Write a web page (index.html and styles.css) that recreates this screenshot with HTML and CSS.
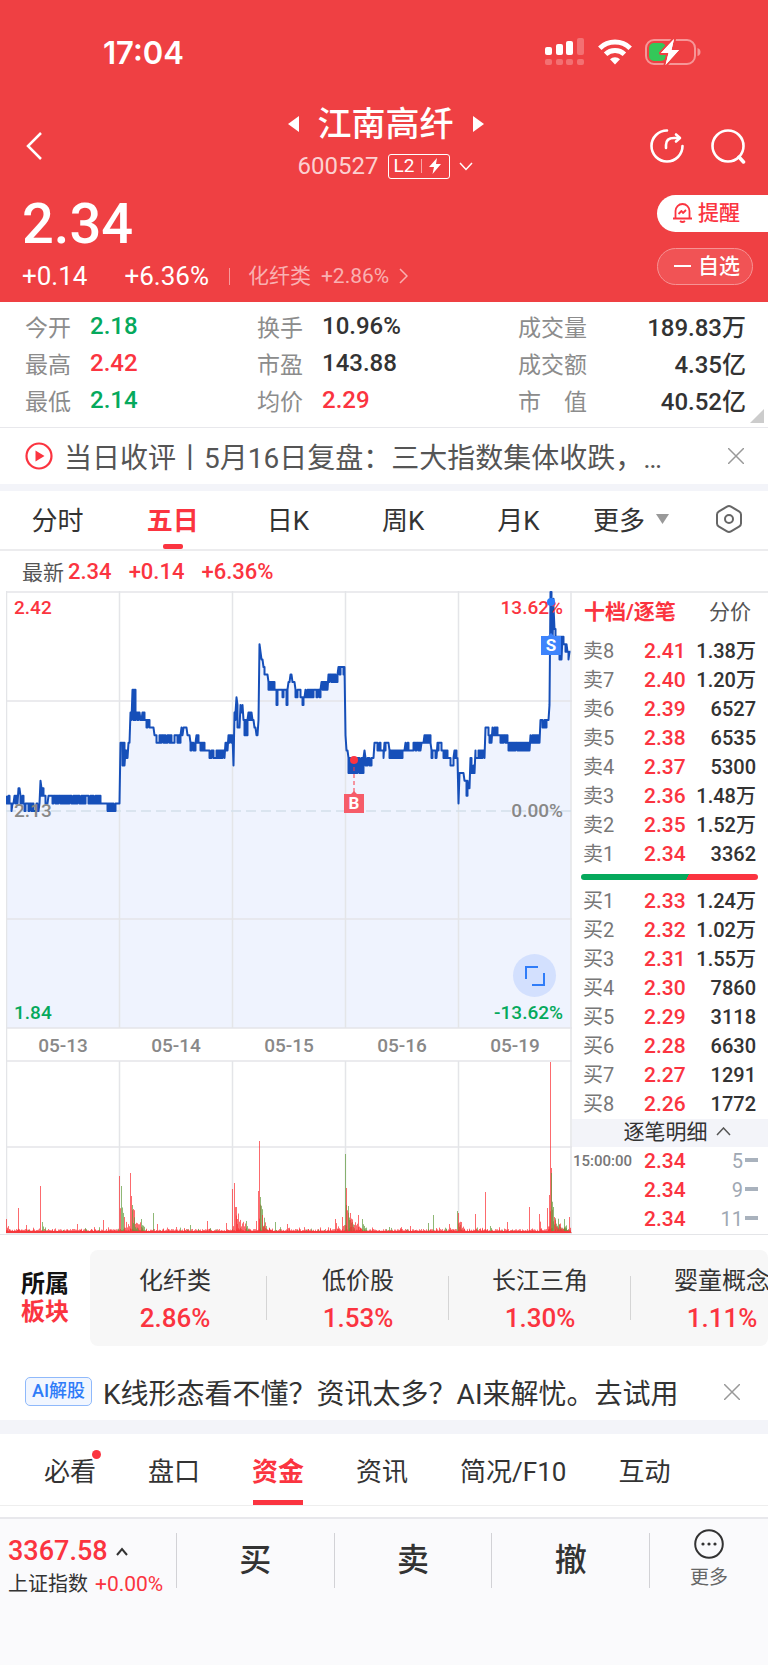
FILE: index.html
```
<!DOCTYPE html>
<html lang="zh-CN">
<head>
  <meta charset="UTF-8">
  <meta name="viewport" content="width=device-width, initial-scale=1.0">
  <title>江南高纤 600527</title>
  <link rel="stylesheet" href="styles.css">
</head>
<body>
  <header class="top">
    <div class="status">
      <span class="clock">17:04</span>
      <div class="status-icons">
        <svg width="40" height="28" viewBox="0 0 40 28" fill="#fff">
          <rect x="0" y="9" width="7" height="8" rx="2"/>
          <rect x="11" y="6" width="7" height="11" rx="2"/>
          <rect x="21" y="3" width="7" height="14" rx="2"/>
          <g opacity=".25">
            <rect x="32" y="0" width="7" height="17" rx="2"/>
            <rect x="0" y="21" width="7" height="6" rx="2"/>
            <rect x="11" y="21" width="7" height="6" rx="2"/>
            <rect x="21" y="21" width="7" height="6" rx="2"/>
            <rect x="32" y="21" width="7" height="6" rx="2"/>
          </g>
        </svg>
        <svg width="34" height="26" viewBox="0 0 34 26" fill="none" stroke="#fff" stroke-width="5">
          <path d="M1.8 9.2a22 22 0 0 1 30.4 0"/>
          <path d="M7.600 15.300a13.600 13.600 0 0 1 18.800 0"/>
          <path d="M17 25.500l-5-5.200a7 7 0 0 1 10 0z" fill="#fff" stroke="none"/>
        </svg>
        <svg width="56" height="28" viewBox="0 0 56 28">
          <rect x="1" y="2" width="49" height="24" rx="8" fill="none" stroke="#fff" stroke-opacity=".45" stroke-width="2"/>
          <path d="M52.500 10v8q3-1 3-4t-3-4z" fill="#fff" opacity=".45"/>
          <rect x="4" y="5" width="17" height="18" rx="5" fill="#34c759"/>
          <path d="M29 1L16 15h7.500L20.500 27 34 12h-7.500z" fill="#fff" stroke="#ef4043" stroke-width="4" paint-order="stroke" stroke-linejoin="round"/>
          <path d="M29 1L16 15h7.500L20.500 27 34 12h-7.500z" fill="#fff"/>
        </svg>
      </div>
    </div>

    <div class="nav">
      <button class="icon-btn back" aria-label="返回">
        <svg width="18" height="30" viewBox="0 0 18 30" fill="none" stroke="#fff" stroke-width="2.500"><path d="M16 2L3 15l13 13"/></svg>
      </button>
      <div class="nav-title">
        <div class="name-row">
          <button class="icon-btn" aria-label="上一只"><svg width="12" height="16" viewBox="0 0 12 16" fill="#fff"><path d="M11 0v16L0 8z"/></svg></button>
          <h1>江南高纤</h1>
          <button class="icon-btn" aria-label="下一只"><svg width="12" height="16" viewBox="0 0 12 16" fill="#fff"><path d="M1 0v16l11-8z"/></svg></button>
        </div>
        <div class="code-row">
          <span>600527</span>
          <span class="level">L2<i></i><svg width="12" height="16" viewBox="0 0 12 16" fill="#fff"><path d="M8 0L0 9h5L3.500 16 12 6H7z"/></svg></span>
          <svg width="14" height="9" viewBox="0 0 14 9" fill="none" stroke="#fff" stroke-width="1.500"><path d="M1 1l6 6.500L13 1"/></svg>
        </div>
      </div>
      <div class="nav-tools">
        <button class="icon-btn" aria-label="分享">
          <svg width="36" height="36" viewBox="0 0 36 36" fill="none" stroke="#fff" stroke-width="2.600" stroke-linecap="round" stroke-linejoin="round">
            <path d="M18 2.500a15.500 15.500 0 1 0 15.500 15.500"/>
            <path d="M17 20v-3q0-7 8-7h5"/><path d="M27 6.500l4 3.500-4 3.500"/>
          </svg>
        </button>
        <button class="icon-btn" aria-label="搜索">
          <svg width="36" height="36" viewBox="0 0 36 36" fill="none" stroke="#fff" stroke-width="2.600" stroke-linecap="round">
            <circle cx="18" cy="18" r="15.500"/><path d="M29 29l4.500 5" stroke-width="3.500"/>
          </svg>
        </button>
      </div>
    </div>

    <div class="quote">
      <div>
        <div class="price">2.34</div>
        <div class="change">
          <span>+0.14</span>
          <span class="pct">+6.36%</span>
          <a href="#sector" class="industry">化纤类 <span>+2.86%</span><svg width="9" height="16" viewBox="0 0 9 16" fill="none" stroke="currentColor" stroke-width="1.500"><path d="M1 1l7 7-7 7"/></svg></a>
        </div>
      </div>
      <div class="quote-btns">
        <button class="remind">
          <svg width="21" height="21" viewBox="0 0 21 21" fill="none" stroke="#fb3440" stroke-width="1.800" stroke-linejoin="round"><path d="M3.500 16V9a7 7 0 0 1 14 0v7M1 16.500h19M8 19q2.500 2 5 0M6.500 12l3-3 1.500 2 3-3"/></svg>
          提醒
        </button>
        <button class="favorite"><i></i>自选</button>
      </div>
    </div>
  </header>

  <section class="stats">
    <dl>
      <div><dt>今开</dt><dd class="green">2.18</dd></div>
      <div><dt>最高</dt><dd class="red">2.42</dd></div>
      <div><dt>最低</dt><dd class="green">2.14</dd></div>
    </dl>
    <dl>
      <div><dt>换手</dt><dd>10.96%</dd></div>
      <div><dt>市盈</dt><dd>143.88</dd></div>
      <div><dt>均价</dt><dd class="red">2.29</dd></div>
    </dl>
    <dl class="wide">
      <div><dt>成交量</dt><dd>189.83万</dd></div>
      <div><dt>成交额</dt><dd>4.35亿</dd></div>
      <div><dt>市　值</dt><dd>40.52亿</dd></div>
    </dl>
  </section>

  <section class="news">
    <svg width="28" height="28" viewBox="0 0 28 28"><circle cx="14" cy="14" r="12.500" fill="none" stroke="#fb3440" stroke-width="2.200"/><path d="M10.500 8.500v11l9-5.500z" fill="#fb3440"/></svg>
    <a href="#news">当日收评丨5月16日复盘：三大指数集体收跌，…</a>
    <button class="icon-btn" aria-label="关闭"><svg width="16" height="16" viewBox="0 0 16 16" stroke="#999" stroke-width="1.500"><path d="M0 0l16 16M16 0L0 16"/></svg></button>
  </section>

  <nav class="period">
    <button>分时</button>
    <button class="active">五日</button>
    <button>日K</button>
    <button>周K</button>
    <button>月K</button>
    <button class="more">更多<svg width="13" height="10" viewBox="0 0 13 10" fill="#999"><path d="M0 0h13L6.500 10z"/></svg></button>
    <button class="setting" aria-label="设置"><svg width="26" height="28" viewBox="0 0 26 28" fill="none" stroke="#666" stroke-width="2"><path d="M11 1.700q2-1.200 4 0l8 4.600q2 1.200 2 3.200v9q0 2-2 3.200l-8 4.600q-2 1.200-4 0l-8-4.600q-2-1.200-2-3.200v-9q0-2 2-3.200z"/><circle cx="13" cy="14" r="4"/></svg></button>
  </nav>

  <div class="latest">最新<span>2.34</span><span>+0.14</span><span>+6.36%</span></div>

  <main class="market">
    <div class="chart-wrap">
      <svg class="chart" viewBox="0 0 566 643">
        <path id="area" fill="#eff3fe"/>
        <g id="grid" stroke="#e4e5e8" stroke-width="1.500"></g>
        <path d="M0 220H565" stroke="#d3dfea" stroke-width="1.500" stroke-dasharray="10 5"/>
        <g id="volume"></g>
        <path id="line" fill="none" stroke="#164fb9" stroke-width="2" stroke-linejoin="round"/>
        <g class="axis">
          <text x="8" y="23" class="up">2.42</text>
          <text x="557" y="23" text-anchor="end" class="up">13.62%</text>
          <text x="8" y="226">2.13</text>
          <text x="557" y="226" text-anchor="end">0.00%</text>
          <text x="8" y="428" class="down">1.84</text>
          <text x="557" y="428" text-anchor="end" class="down">-13.62%</text>
        </g>
        <g class="axis" id="dates" text-anchor="middle"></g>
        <g class="mark">
          <path d="M348 169v34" stroke="#fb3440" stroke-dasharray="4 3"/>
          <circle cx="348" cy="169" r="4" fill="#fb3440"/>
          <path d="M338 203h7l3-3 3 3h7v19h-20z" fill="#f65c69"/>
          <text x="348" y="218">B</text>
          <circle cx="545" cy="11" r="4" fill="#2a7cfb"/>
          <path d="M535 45h7l3-3 3 3h7v19h-20z" fill="#3e84fc"/>
          <text x="545" y="60">S</text>
        </g>
      </svg>
      <button class="expand" aria-label="全屏">
        <svg width="20" height="20" viewBox="0 0 20 20" fill="none" stroke="#2f7cf8" stroke-width="2"><path d="M1 13V1h12M19 7v12H7"/></svg>
      </button>
    </div>

    <aside class="book">
      <div class="book-tabs">
        <button class="active">十档/逐笔</button>
        <button>分价</button>
      </div>
      <table>
        <tr><th>卖8</th><td>2.41</td><td>1.38万</td></tr>
        <tr><th>卖7</th><td>2.40</td><td>1.20万</td></tr>
        <tr><th>卖6</th><td>2.39</td><td>6527</td></tr>
        <tr><th>卖5</th><td>2.38</td><td>6535</td></tr>
        <tr><th>卖4</th><td>2.37</td><td>5300</td></tr>
        <tr><th>卖3</th><td>2.36</td><td>1.48万</td></tr>
        <tr><th>卖2</th><td>2.35</td><td>1.52万</td></tr>
        <tr><th>卖1</th><td>2.34</td><td>3362</td></tr>
      </table>
      <div class="ratio"></div>
      <table>
        <tr><th>买1</th><td>2.33</td><td>1.24万</td></tr>
        <tr><th>买2</th><td>2.32</td><td>1.02万</td></tr>
        <tr><th>买3</th><td>2.31</td><td>1.55万</td></tr>
        <tr><th>买4</th><td>2.30</td><td>7860</td></tr>
        <tr><th>买5</th><td>2.29</td><td>3118</td></tr>
        <tr><th>买6</th><td>2.28</td><td>6630</td></tr>
        <tr><th>买7</th><td>2.27</td><td>1291</td></tr>
        <tr><th>买8</th><td>2.26</td><td>1772</td></tr>
      </table>
      <button class="detail">逐笔明细<svg width="15" height="9" viewBox="0 0 15 9" fill="none" stroke="#555" stroke-width="1.500"><path d="M1 8l6.500-7L14 8"/></svg></button>
      <table class="ticks">
        <tr><th>15:00:00</th><td>2.34</td><td>5<i></i></td></tr>
        <tr><th></th><td>2.34</td><td>9<i></i></td></tr>
        <tr><th></th><td>2.34</td><td>11<i></i></td></tr>
      </table>
    </aside>
  </main>

  <section class="sector" id="sector">
    <h2>所属<span>板块</span></h2>
    <div class="sector-list">
      <a href="#s1">化纤类<b>2.86%</b></a>
      <a href="#s2">低价股<b>1.53%</b></a>
      <a href="#s3">长江三角<b>1.30%</b></a>
      <a href="#s4">婴童概念<b>1.11%</b></a>
    </div>
  </section>

  <section class="ai">
    <span class="ai-tag">AI解股</span>
    <a href="#ai">K线形态看不懂？资讯太多？AI来解忧。去试用</a>
    <button class="icon-btn" aria-label="关闭"><svg width="16" height="16" viewBox="0 0 16 16" stroke="#999" stroke-width="1.500"><path d="M0 0l16 16M16 0L0 16"/></svg></button>
  </section>

  <nav class="info-tabs">
    <button class="dot">必看</button>
    <button>盘口</button>
    <button class="active">资金</button>
    <button>资讯</button>
    <button>简况/F10</button>
    <button>互动</button>
  </nav>

  <footer class="bottom">
    <div class="index">
      <div class="index-value">3367.58<svg width="12" height="9" viewBox="0 0 12 9" fill="none" stroke="#333" stroke-width="2"><path d="M1 8l5-6 5 6"/></svg></div>
      <div class="index-name">上证指数 <span>+0.00%</span></div>
    </div>
    <button class="trade">买</button>
    <button class="trade">卖</button>
    <button class="trade">撤</button>
    <button class="bottom-more">
      <svg width="30" height="30" viewBox="0 0 30 30"><circle cx="15" cy="15" r="13.800" fill="none" stroke="#333" stroke-width="2"/><g fill="#333"><circle cx="9" cy="15" r="1.600"/><circle cx="15" cy="15" r="1.600"/><circle cx="21" cy="15" r="1.600"/></g></svg>
      更多
    </button>
  </footer>

  <script src="chart.js"></script>
</body>
</html>
```
FILE: styles.css
```
* {
  box-sizing: border-box;
}
body {
  margin: 0;
  min-height: 100vh;
  display: flex;
  flex-direction: column;
  font-family: Roboto, "Noto Sans CJK SC", sans-serif;
  color: #333;
  background: #fff;
  overflow-x: hidden;
}
button {
  font: inherit;
  color: inherit;
  background: none;
  border: none;
  padding: 0;
  cursor: pointer;
}
a {
  color: inherit;
  text-decoration: none;
}
svg {
  display: block;
  flex-shrink: 0;
}
.red {
  color: #fb3440;
}
.green {
  color: #05a95c;
}

/* header */
.top {
  background: #ef4043;
  color: #fff;
  height: 302px;
}
.status {
  display: flex;
  justify-content: space-between;
  align-items: center;
  height: 104px;
  padding: 0 67px 0 103px;
}
.clock {
  font-family: Inter, sans-serif;
  font-size: 31px;
  font-weight: 600;
}
.status-icons {
  display: flex;
  align-items: center;
  gap: 13px;
}
.nav {
  display: grid;
  grid-template-columns: 1fr auto 1fr;
  align-items: center;
  height: 84px;
  padding: 0 22px 0 25px;
}
.back {
  justify-self: start;
}
.name-row, .code-row {
  display: flex;
  align-items: center;
  justify-content: center;
}
.name-row {
  gap: 18px;
}
h1 {
  margin: 0;
  font-size: 34px;
  line-height: 40px;
  font-weight: 500;
}
.code-row {
  gap: 9px;
  font-size: 24px;
  line-height: 44px;
  color: #fcd0d1;
}
.level {
  display: flex;
  align-items: center;
  gap: 7px;
  height: 25px;
  padding: 0 8px 0 5px;
  border: 1px solid #fff;
  border-radius: 3px;
  font-size: 19px;
  color: #fff;
}
.level i {
  width: 1px;
  height: 14px;
  background: #f9a5a6;
}
.nav-tools {
  justify-self: end;
  display: flex;
  gap: 25px;
}
.quote {
  display: flex;
  justify-content: space-between;
}
.price {
  padding-left: 22px;
  font-size: 56px;
  line-height: 72px;
  font-weight: 500;
}
.change {
  display: flex;
  align-items: center;
  padding-left: 22px;
  font-size: 26px;
  line-height: 32px;
}
.pct {
  padding: 0 20px 0 37px;
}
.industry {
  display: flex;
  align-items: center;
  gap: 10px;
  font-size: 21px;
  line-height: 28px;
  color: #f9b0b1;
}
.industry::before {
  content: "";
  width: 1px;
  height: 17px;
  margin-right: 8px;
  background: #f79a9b;
}
.quote-btns {
  width: 111px;
  padding-top: 7px;
}
.remind, .favorite {
  display: flex;
  align-items: center;
  height: 37px;
  font-size: 21px;
  line-height: 28px;
  font-weight: 500;
}
.remind {
  width: 100%;
  padding: 0 0 2px 15px;
  gap: 5px;
  background: #fff;
  color: #fb3440;
  border-radius: 19px 0 0 19px;
}
.favorite {
  width: 96px;
  margin-top: 16px;
  padding: 0 0 2px 16px;
  gap: 7px;
  border: 1px solid #f69394;
  border-radius: 19px;
  background: #f15355;
}
.favorite i {
  width: 17px;
  height: 2px;
  background: #fff;
}

/* key figures */
.stats {
  position: relative;
  display: grid;
  grid-template-columns: 232px 261px 1fr;
  padding: 5px 22px 9px 25px;
  border-bottom: 1px solid #e8e8ec;
}
.stats::after {
  content: "";
  position: absolute;
  right: 4px;
  bottom: 4px;
  border-left: 14px solid transparent;
  border-bottom: 14px solid #ccc;
}
.stats dl {
  margin: 0;
}
.stats dl div {
  display: flex;
  align-items: center;
  gap: 19px;
  height: 37px;
}
.stats dt {
  font-size: 23px;
  color: #8c8c8c;
}
.stats dd {
  margin: 0;
  font-size: 24px;
  font-weight: 500;
}
.stats .wide div {
  justify-content: space-between;
}

.news, .ai {
  display: flex;
  align-items: center;
  padding: 0 24px 0 25px;
  font-size: 28px;
  border-bottom: 7px solid #f3f4f9;
}
.news a, .ai a {
  flex: 1;
  white-space: nowrap;
}
.news {
  height: 63px;
  gap: 11px;
  color: #555;
}

/* chart period */
.period {
  display: grid;
  grid-template-columns: repeat(5, 15%) 110px 1fr;
  height: 60px;
  border-bottom: 2px solid #ececee;
  font-size: 26px;
}
.period button {
  padding-bottom: 3px;
}
.period .active {
  position: relative;
  color: #fb3440;
  font-weight: 700;
}
.period .active::after {
  content: "";
  position: absolute;
  left: 0;
  right: 0;
  bottom: 0;
  width: 20px;
  height: 5px;
  margin: 0 auto;
  border-radius: 2px;
  background: #fb3440;
}
.period .more, .period .setting {
  display: flex;
  align-items: center;
  justify-content: center;
  gap: 11px;
}
.period .setting {
  padding-left: 4px;
}
.latest {
  display: flex;
  align-items: center;
  height: 40px;
  padding-left: 22px;
  font-size: 21px;
  color: #555;
}
.latest span {
  margin: 0 13px 0 4px;
  font-size: 22px;
  font-weight: 500;
  color: #fb3440;
}

/* chart and order book */
.market {
  display: grid;
  grid-template-columns: 1fr 196px;
  align-items: start;
  border-bottom: 1px solid #e4e5e8;
}
.chart-wrap {
  position: relative;
  padding-left: 6px;
}
.chart {
  width: 100%;
}
.axis text {
  font-size: 19px;
  font-weight: 500;
  fill: #888;
}
.axis .up {
  fill: #fb3440;
}
.axis .down {
  fill: #05a95c;
}
.mark text {
  font-size: 17px;
  font-weight: 700;
  fill: #fff;
  text-anchor: middle;
}
.expand {
  position: absolute;
  right: 16px;
  bottom: 237px;
  display: flex;
  align-items: center;
  justify-content: center;
  width: 43px;
  height: 43px;
  border-radius: 50%;
  background: #d3e0fe;
}
.book {
  border-top: 2px solid #e9eaec;
}
.book-tabs {
  display: flex;
  justify-content: space-between;
  height: 44px;
  padding: 0 17px 6px 12px;
  font-size: 21px;
  line-height: 36px;
  color: #555;
}
.book-tabs .active {
  color: #fb3440;
  font-weight: 700;
}
.book table {
  width: 100%;
  border-collapse: collapse;
  table-layout: fixed;
}
.book tr {
  height: 29px;
}
.book th, .book td {
  padding: 0;
  line-height: 29px;
}
.book th {
  width: 72px;
  padding-left: 11px;
  font-size: 20px;
  font-weight: 400;
  text-align: left;
  color: #777;
}
.book td {
  width: 44px;
  font-size: 21px;
  font-weight: 500;
  color: #fb3440;
}
.book td:last-child {
  width: 80px;
  padding-right: 12px;
  text-align: right;
  font-size: 20px;
  color: #333;
}
.ratio {
  height: 6px;
  margin: 5px 10px 7px 9px;
  border-radius: 3px;
  background: linear-gradient(120deg, #05a95c 60%, #fb3440 60%);
}
.detail {
  display: flex;
  align-items: center;
  justify-content: center;
  gap: 8px;
  width: 100%;
  height: 28px;
  padding: 0 8px 3px 22px;
  background: #f3f4f9;
  font-size: 21px;
  line-height: 24px;
}
.book .ticks th {
  padding-left: 1px;
  font-size: 15px;
  font-weight: 500;
}
.book .ticks td:last-child {
  padding-right: 10px;
  font-weight: 400;
  color: #9fa8b3;
}
.ticks i {
  display: inline-block;
  width: 13px;
  height: 4px;
  margin-left: 2px;
  vertical-align: 6px;
  background: #a9b2bd;
}

/* sectors */
.sector {
  display: flex;
  align-items: center;
  padding: 15px 0 17px 21px;
}
h2 {
  width: 69px;
  margin: 0;
  font-size: 24px;
  line-height: 28px;
  font-weight: 700;
  color: #111;
}
h2 span {
  display: block;
  color: #fb3440;
}
.sector-list {
  flex: 1;
  display: flex;
  height: 96px;
  border-radius: 8px;
  background: #f7f7f7;
  overflow: hidden;
}
.sector-list a {
  position: relative;
  flex: 0 0 182px;
  padding-top: 13px;
  text-align: center;
  font-size: 24px;
  line-height: 37px;
  white-space: nowrap;
}
.sector-list a:first-child {
  flex-basis: 177px;
  padding-right: 7px;
}
.sector-list a:not(:last-child)::after {
  content: "";
  position: absolute;
  right: 0;
  top: 26px;
  width: 1px;
  height: 44px;
  background: #d5d5d5;
}
.sector-list b {
  display: block;
  font-size: 26px;
  font-weight: 500;
  color: #fb3440;
}

.ai {
  height: 71px;
  gap: 11px;
  padding-right: 28px;
  border-bottom: 14px solid #f3f4f9;
}
.ai-tag {
  height: 29px;
  padding: 0 6px;
  border: 1px solid #8fb9fb;
  border-radius: 5px;
  background: #f1f6ff;
  font-size: 18px;
  line-height: 26px;
  font-weight: 500;
  color: #2f7cf8;
}

.info-tabs {
  display: flex;
  gap: 52px;
  height: 72px;
  padding: 0 44px;
  border-bottom: 1px solid #eee;
  font-size: 26px;
}
.info-tabs button {
  position: relative;
  white-space: nowrap;
}
.info-tabs .active {
  color: #fb3440;
  font-weight: 700;
}
.info-tabs .active::after {
  content: "";
  position: absolute;
  left: 1px;
  right: 1px;
  bottom: 0;
  height: 5px;
  background: #fb3440;
}
.dot::after {
  content: "";
  position: absolute;
  right: -5px;
  top: 16px;
  width: 9px;
  height: 9px;
  border-radius: 50%;
  background: #fb3440;
}

/* bottom bar */
.bottom {
  flex: 1;
  display: grid;
  grid-template-columns: 176px 1fr 1fr 1fr 119px;
  align-items: start;
  margin-top: 11px;
  padding: 14px 0 64px;
  border-top: 2px solid #e8e8ec;
  background: #fafafc;
}
.index {
  padding-left: 8px;
  white-space: nowrap;
}
.index-value {
  display: flex;
  align-items: center;
  gap: 8px;
  font-size: 27px;
  line-height: 36px;
  font-weight: 500;
  color: #fb3440;
}
.index-name {
  font-size: 20px;
  line-height: 30px;
}
.index-name span {
  margin-left: 2px;
  font-size: 21px;
  color: #fb3440;
}
.trade {
  height: 55px;
  border-left: 1px solid #d2d2d6;
  font-size: 32px;
  line-height: 55px;
  font-weight: 500;
}
.bottom-more {
  display: flex;
  flex-direction: column;
  align-items: center;
  height: 55px;
  border-left: 1px solid #d2d2d6;
  font-size: 19px;
  line-height: 38px;
  color: #666;
}
.bottom-more svg {
  margin-top: -4px;
}
```
FILE: chart.js
```
const NS = 'http://www.w3.org/2000/svg';
const DAY = 113;      // width of one trading day
const ZERO = 220;     // y of the 2.13 line
const STEP = 7.58;    // height of one cent
const BOTTOM = 437;
const BASE = 642;     // bottom of the volume pane

// [x, low, high] in cents above 2.13, price moves inside the band until next x
const price = [
  [0, 1, 2], [4, 0, 1], [6, 1, 1], [8, 1, 2], [12, 3, 3], [14, 1, 2], [18, 0, 1], [33, 1, 1],
  [34, 4, 4], [35, 2, 3], [38, 1, 2], [42, 2, 2], [46, 1, 2], [96, 0, 1], [110, 1, 1],
  [114, 9, 9], [116, 6, 9], [119, 7, 8], [122, 9, 9], [124, 12, 13], [126, 16, 16], [127, 12, 16],
  [130, 13, 13], [131, 12, 13], [134, 11, 12], [136, 12, 13], [140, 11, 12], [148, 10, 10],
  [150, 9, 10], [175, 10, 11], [177, 11, 11], [181, 10, 10], [184, 8, 9], [190, 9, 10],
  [193, 8, 9], [201, 8, 8], [203, 7, 8], [219, 8, 9], [222, 9, 10], [227, 6, 6],
  [228, 12, 13], [230, 15, 15], [231, 11, 14], [234, 13, 14], [237, 12, 12], [238, 10, 12],
  [242, 12, 13], [246, 12, 12], [248, 11, 11], [250, 10, 10], [252, 12, 12], [253, 22, 22],
  [254, 21, 21], [255, 19, 20], [257, 18, 19], [260, 16, 18], [262, 16, 17], [270, 14, 16],
  [273, 15, 16], [280, 14, 16], [282, 17, 17], [284, 18, 18], [286, 17, 17], [289, 15, 16],
  [296, 14, 15], [299, 15, 16], [315, 16, 17], [322, 17, 18], [332, 18, 19],
  [339, 10, 10], [340, 7, 8], [342, 5, 7], [358, 8, 8], [359, 6, 7], [368, 8, 9], [375, 7, 8],
  [378, 8, 9], [383, 7, 8], [399, 8, 9], [415, 9, 9], [418, 9, 10], [425, 7, 8], [431, 8, 9],
  [436, 7, 8], [444, 6, 7], [448, 7, 8], [452, 1, 1], [453, 5, 5], [455, 3, 5],
  [458, 2, 4], [462, 3, 3], [464, 5, 7], [467, 5, 6], [469, 7, 8], [479, 11, 11],
  [481, 10, 11], [483, 9, 10], [486, 10, 11], [492, 9, 10], [502, 8, 9], [524, 9, 10],
  [534, 11, 12], [543, 14, 14], [544, 22, 29], [547, 27, 28], [548, 24, 24], [549, 23, 24], [552, 20, 23],
  [556, 22, 23], [558, 21, 22], [561, 20, 21], [563, 21, 21], [565, 21, 21]
];

// [x, height, tail length, green?]
const bursts = [
  [0, 14, 5], [12, 25, 1], [20, 8, 1], [34, 47, 1], [36, 11, 3, 1], [71, 9, 1], [97, 13, 1],
  [113, 57, 2], [115, 47, 4, 1], [118, 16, 12], [124, 60, 1], [125, 37, 14], [126, 28, 8, 1],
  [135, 14, 6, 1], [147, 20, 1, 1], [151, 9, 3], [170, 6, 1], [184, 8, 1, 1], [201, 12, 1], [220, 10, 4],
  [226, 44, 2], [228, 50, 5], [230, 26, 16], [240, 12, 6, 1], [250, 12, 3], [252, 42, 2], [253, 92, 2],
  [254, 36, 8, 1], [256, 18, 12], [269, 11, 2, 1], [281, 9, 7], [329, 14, 8],
  [336, 16, 8], [339, 79, 2, 1], [340, 45, 6], [342, 27, 8, 1], [344, 20, 15], [352, 18, 4], [356, 14, 5, 1],
  [383, 6, 1, 1], [404, 7, 1], [422, 10, 1, 1], [427, 18, 1, 1], [443, 9, 8],
  [451, 22, 6, 1], [452, 20, 8], [469, 19, 1], [479, 41, 1], [484, 7, 1, 1], [501, 11, 1], [523, 26, 1],
  [533, 19, 3], [541, 25, 3], [543, 38, 3], [544, 171, 1], [545, 65, 2], [545, 60, 3, 1],
  [547, 26, 16, 1], [548, 16, 18], [563, 16, 2], [558, 14, 6, 1]
];

// repeatable jitter, so the chart looks the same on every load
let seed = 7;
function rand() {
  seed = (seed * 16807) % 2147483647;
  return seed / 2147483647;
}

function add(parent, name, attrs) {
  const el = document.createElementNS(NS, name);
  for (const key in attrs) el.setAttribute(key, attrs[key]);
  document.getElementById(parent).appendChild(el);
  return el;
}

function drawGrid() {
  for (let i = 0; i <= 5; i++) {
    const x = Math.min(i * DAY + 0.5, 565);
    add('grid', 'path', { d: `M${x} 0V${BOTTOM}M${x} 470V${BASE}` });
  }
  add('grid', 'path', { d: `M0.5 ${BOTTOM}V470M565 ${BOTTOM}V470` });
  [1, 110, 328, 437, 470, 556, 642].forEach(y => add('grid', 'path', { d: `M0 ${y}H566` }));
  ['05-13', '05-14', '05-15', '05-16', '05-19'].forEach((day, i) => {
    add('dates', 'text', { x: i * DAY + 57, y: 461 }).textContent = day;
  });
}

function drawPrice() {
  const points = [];
  for (let i = 0; i < price.length - 1; i++) {
    const [x, low, high] = price[i];
    let level = high;
    for (let px = x; px < price[i + 1][0]; px++) {
      const y = Math.max(ZERO - level * STEP, 1);
      points.push(`${px + 0.5} ${y.toFixed(1)}`);
      const next = rand() < 0.7 ? (level === high ? low : high) : level;
      if (next !== level) {
        points.push(`${px + 0.5} ${Math.max(ZERO - next * STEP, 1).toFixed(1)}`);
      }
      level = next;
    }
  }
  const d = 'M' + points.join('L');
  document.getElementById('line').setAttribute('d', d);
  document.getElementById('area').setAttribute('d', d + `L565 ${BOTTOM}L0 ${BOTTOM}Z`);
}

function bar(x, height, green) {
  add('volume', 'rect', {
    x: x, y: BASE - height, width: 1, height: height,
    fill: green ? '#5f9a3c' : '#fb2c30', opacity: 0.7
  });
}

function drawVolume() {
  for (let x = 0; x < 565; x++) {
    bar(x, 2 + rand() * 2, false);
    if (rand() < 0.2) bar(x, 2 + rand() * 4, rand() < 0.4);
  }
  bursts.forEach(([x, height, tail, green]) => {
    bar(x, height, green);
    for (let i = 1; i < tail; i++) {
      bar(x + i, height * (1 - i / tail) * (0.3 + rand() * 0.6), green);
    }
  });
  add('volume', 'path', { d: `M0 ${BASE - 1}H565`, stroke: '#f5383c', 'stroke-width': 2 });
}

drawGrid();
drawPrice();
drawVolume();
```
